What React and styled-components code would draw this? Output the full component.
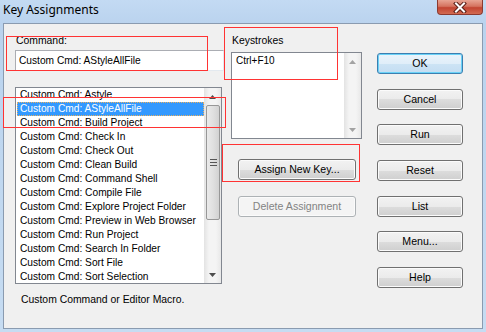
import React from 'react';
import styled, { createGlobalStyle } from 'styled-components';

const GlobalStyle = createGlobalStyle`
  html, body { margin: 0; padding: 0; }
  body {
    width: 486px;
    height: 332px;
    overflow: hidden;
    font-family: "Liberation Sans", Arial, sans-serif;
    font-size: 10.4px;
    color: #000;
  }
`;

const Frame = styled.div`
  position: relative;
  width: 486px;
  height: 332px;
  box-sizing: border-box;
  padding: 0 3px 3px;
  display: flex;
  flex-direction: column;
  background: linear-gradient(#c3daf3, #bad3ee 24px, #c6dcf2);
`;

const TitleBar = styled.div`
  height: 23px;
  display: flex;
  align-items: flex-start;
  justify-content: space-between;
`;

const Title = styled.span`
  font-family: "Noto Sans", "Liberation Sans", sans-serif;
  font-size: 12px;
  line-height: 16px;
  padding-top: 2px;
  color: #000;
`;

const CloseBtn = styled.div`
  width: 46px;
  height: 15px;
  box-sizing: border-box;
  border: 1px solid #8c3a30;
  border-top: none;
  border-radius: 0 0 4px 4px;
  background: linear-gradient(#e8a493, #d5735f 45%, #c24431 55%, #d26b52);
  display: flex;
  align-items: center;
  justify-content: center;
`;

const Client = styled.div`
  flex: 1;
  border: 1px solid #8a9bb0;
  background: #f0f0f0;
  display: flex;
  align-items: flex-start;
  padding: 10px 0 0 11px;
`;

const Column = styled.div`
  display: flex;
  flex-direction: column;
  align-items: flex-start;
  width: ${({ $w }) => $w}px;
  margin-left: ${({ $ml }) => $ml || 0}px;
  margin-top: ${({ $mt }) => $mt || 0}px;
  gap: ${({ $gap }) => $gap || 0}px;
`;

const Label = styled.div`
  line-height: 13px;
  margin-left: 1px;
`;

const TextBox = styled.div`
  margin-top: 3px;
  width: 209px;
  height: 21px;
  box-sizing: border-box;
  background: #fff;
  border: 1px solid #abadb3;
  border-right-color: #e3e9ef;
  border-bottom-color: #e3e9ef;
  padding-left: 3px;
  line-height: 19px;
  font-size: 10.2px;
`;

const ListBox = styled.div`
  margin-top: ${({ $mt }) => $mt}px;
  width: ${({ $w }) => $w}px;
  height: ${({ $h }) => $h}px;
  box-sizing: border-box;
  background: #fff;
  border: 1px solid #828790;
  display: flex;
  overflow: hidden;
`;

const Items = styled.div`
  flex: 1;
  display: flex;
  flex-direction: column;
  overflow: hidden;
`;

const Item = styled.div`
  flex: none;
  height: 14px;
  line-height: 14px;
  margin-left: 1px;
  padding-left: 3px;
  white-space: nowrap;
  font-size: 10.2px;
  box-sizing: border-box;
  background: ${({ $sel }) => ($sel ? '#3399ff' : 'transparent')};
  color: ${({ $sel }) => ($sel ? '#fff' : '#000')};
  outline: ${({ $sel }) => ($sel ? '1px dotted #e8b060' : 'none')};
  outline-offset: -1px;
`;

const KeyItem = styled.div`
  padding: 1px 0 0 4px;
  line-height: 14px;
  font-size: 10px;
`;

const ScrollBar = styled.div`
  width: 17px;
  flex: none;
  display: flex;
  flex-direction: column;
  background: linear-gradient(90deg, #e3e3e3, #f4f4f4 30%, #f4f4f4 70%, #e8e8e8);
`;

const Arrow = styled.div`
  height: 17px;
  flex: none;
  display: flex;
  align-items: center;
  justify-content: center;
`;

const Thumb = styled.div`
  height: ${({ $h }) => $h}px;
  margin: 0 1px 0 2px;
  box-sizing: border-box;
  border: 1px solid #979797;
  border-radius: 2px;
  background: linear-gradient(90deg, #eaeaea, #e0e0e0 50%, #d2d2d2);
  display: flex;
  align-items: center;
  justify-content: center;
`;

const Fill = styled.div`
  flex: 1;
`;

const Description = styled.div`
  margin-top: 9px;
  margin-left: 6px;
  line-height: 13px;
`;

const Button = styled.div`
  width: ${({ $w }) => $w || 86}px;
  height: 21px;
  margin-top: ${({ $mt }) => $mt || 0}px;
  margin-left: ${({ $ml }) => $ml || 0}px;
  box-sizing: border-box;
  border-radius: 3px;
  border: 1px solid ${({ $def, $off }) => ($def ? '#3c7fb1' : $off ? '#adb2b5' : '#707070')};
  box-shadow: ${({ $def }) => ($def ? 'inset 0 0 0 1px #6ad2f7' : 'inset 0 0 0 1px #fbfbfb')};
  background: ${({ $def, $off }) =>
    $off
      ? '#f4f4f4'
      : $def
      ? 'linear-gradient(#eaf4fb, #e0eef9 50%, #cde4f5 50%, #c4ddf2)'
      : 'linear-gradient(#f2f2f2, #ebebeb 50%, #dddddd 50%, #cfcfcf)'};
  color: ${({ $off }) => ($off ? '#838383' : '#000')};
  display: flex;
  align-items: center;
  justify-content: center;
  line-height: 13px;
  font-size: 10.6px;
`;

const Note = styled.div`
  position: absolute;
  z-index: 2;
  left: ${({ $x }) => $x}px;
  top: ${({ $y }) => $y}px;
  width: ${({ $w }) => $w}px;
  height: ${({ $h }) => $h}px;
  box-sizing: border-box;
  border: 1px solid #ff3333;
  pointer-events: none;
`;

const Tri = ({ down, color }) => (
  <svg width="7" height="4" viewBox="0 0 7 4">
    <path d={down ? 'M0 0H7L3.5 4Z' : 'M0 4H7L3.5 0Z'} fill={color} />
  </svg>
);

const Grip = () => (
  <svg width="7" height="7" viewBox="0 0 7 7">
    <path d="M0 0.5H7M0 3.5H7M0 6.5H7" stroke="#555" strokeWidth="1" />
  </svg>
);

const commands = [
  'Astyle',
  'AStyleAllFile',
  'Build Project',
  'Check In',
  'Check Out',
  'Clean Build',
  'Command Shell',
  'Compile File',
  'Explore Project Folder',
  'Preview in Web Browser',
  'Run Project',
  'Search In Folder',
  'Sort File',
  'Sort Selection',
];

const sideButtons = ['OK', 'Cancel', 'Run', 'Reset', 'List', 'Menu...', 'Help'];

export default function App() {
  return (
    <Frame>
      <GlobalStyle />
      <TitleBar>
        <Title>Key Assignments</Title>
        <CloseBtn>
          <svg width="14" height="11" viewBox="0 0 14 11">
            <path d="M3 1.5L11 9.5M11 1.5L3 9.5" stroke="#5a2018" strokeWidth="4" strokeLinecap="square" />
            <path d="M3 1.5L11 9.5M11 1.5L3 9.5" stroke="#fff" strokeWidth="2" strokeLinecap="square" />
          </svg>
        </CloseBtn>
      </TitleBar>
      <Client>
        <Column $w={209}>
          <Label>Command:</Label>
          <TextBox>Custom Cmd: AStyleAllFile</TextBox>
          <ListBox $mt={16} $w={207} $h={197}>
            <Items>
              {commands.map((c) => (
                <Item key={c} $sel={c === 'AStyleAllFile'}>
                  Custom Cmd: {c}
                </Item>
              ))}
            </Items>
            <ScrollBar>
              <Arrow>
                <Tri color="#4d4d4d" />
              </Arrow>
              <Thumb $h={115}>
                <Grip />
              </Thumb>
              <Fill />
              <Arrow>
                <Tri down color="#4d4d4d" />
              </Arrow>
            </ScrollBar>
          </ListBox>
          <Description>Custom Command or Editor Macro.</Description>
        </Column>
        <Column $w={131} $ml={7}>
          <Label>Keystrokes</Label>
          <ListBox $mt={5} $w={131} $h={87}>
            <Items>
              <KeyItem>Ctrl+F10</KeyItem>
            </Items>
            <ScrollBar>
              <Arrow>
                <Tri color="#a3a3a3" />
              </Arrow>
              <Fill />
              <Arrow>
                <Tri down color="#a3a3a3" />
              </Arrow>
            </ScrollBar>
          </ListBox>
          <Button $w={118} $ml={7} $mt={20}>Assign New Key...</Button>
          <Button $w={118} $ml={7} $mt={16} $off>Delete Assignment</Button>
        </Column>
        <Column $w={86} $ml={15} $mt={19} $gap={14.7}>
          {sideButtons.map((b) => (
            <Button key={b} $def={b === 'OK'}>
              {b}
            </Button>
          ))}
        </Column>
      </Client>
      <Note $x={6} $y={36} $w={202} $h={35} />
      <Note $x={3} $y={97} $w={223} $h={31} />
      <Note $x={224} $y={27} $w={114} $h={53} />
      <Note $x={222} $y={144} $w={138} $h={38} />
    </Frame>
  );
}
